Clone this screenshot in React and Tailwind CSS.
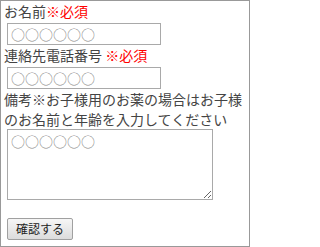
export default function App() {
  const font = { fontFamily: '"Noto Sans CJK JP", "Noto Sans", sans-serif' };
  return (
    <div
      className="w-[250px] h-[247px] border border-[#999] pl-[3px] pr-[3px] text-[#444] bg-white box-border"
      style={font}
    >
      <div className="text-[14px] leading-[20px]">
        お名前<span className="text-[#f00]">※必須</span>
      </div>
      <input
        type="text"
        placeholder="○○○○○○"
        className="block ml-[3px] mt-[2px] w-[154px] h-[22px] border border-[#a9a9a9] px-[3px] text-[14px] leading-[20px] placeholder:text-[#8a8a8a] outline-none"
        style={font}
      />
      <div className="text-[14px] leading-[20px]">
        連絡先電話番号 <span className="text-[#f00]">※必須</span>
      </div>
      <input
        type="text"
        placeholder="○○○○○○"
        className="block ml-[3px] mt-[2px] w-[154px] h-[22px] border border-[#a9a9a9] px-[3px] text-[14px] leading-[20px] placeholder:text-[#8a8a8a] outline-none"
        style={font}
      />
      <div className="text-[14px] leading-[20px]">
        備考※お子様用のお薬の場合はお子様のお名前と年齢を入力してください
      </div>
      <textarea
        placeholder="○○○○○○"
        className="block ml-[3px] w-[206px] h-[71px] border border-[#a9a9a9] px-[3px] py-[2px] text-[14px] leading-[18px] placeholder:text-[#8a8a8a] outline-none"
        style={font}
      />
      <button
        type="button"
        className="block ml-[3px] mt-[18px] w-[66px] h-[22px] border border-[#a0a0a0] rounded-[2px] bg-gradient-to-b from-[#f6f6f6] to-[#dcdcdc] text-[12px] leading-[20px] text-[#222] p-0"
        style={font}
      >
        確認する
      </button>
    </div>
  );
}
